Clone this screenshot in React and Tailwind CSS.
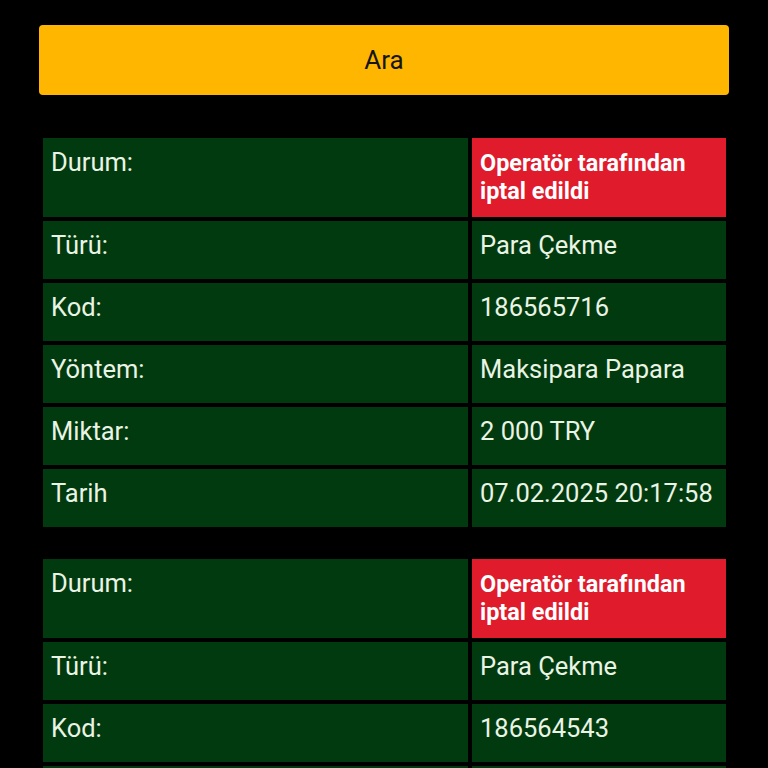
import React from 'react';

const islemler = [
  {
    durum: 'Operatör tarafından iptal edildi',
    turu: 'Para Çekme',
    kod: '186565716',
    yontem: 'Maksipara Papara',
    miktar: '2 000 TRY',
    tarih: '07.02.2025 20:17:58',
  },
  {
    durum: 'Operatör tarafından iptal edildi',
    turu: 'Para Çekme',
    kod: '186564543',
    yontem: 'Maksipara Papara',
    miktar: '2 000 TRY',
    tarih: '07.02.2025 20:05:12',
  },
];

const Hucre = ({ children }) => (
  <div className="bg-[#023a0f] pl-[8px] pr-[8px] pt-[10px] pb-[20px] text-[25.5px] leading-[28px] text-[#eaf4e4]">
    {children}
  </div>
);

const IslemTablosu = ({ islem }) => {
  const satirlar = [
    ['Türü:', islem.turu],
    ['Kod:', islem.kod],
    ['Yöntem:', islem.yontem],
    ['Miktar:', islem.miktar],
    ['Tarih', islem.tarih],
  ];

  return (
    <div className="grid grid-cols-[425px_254px] gap-[4px] p-[4px] w-[691px]">
      <Hucre>Durum:</Hucre>
      <div className="bg-[#df1b2c] pl-[8px] pr-[8px] pt-[11px] pb-[12px] text-[23.4px] leading-[28px] font-bold text-white">
        Operatör tarafından
        <br />
        iptal edildi
      </div>
      {satirlar.map(([etiket, deger]) => (
        <React.Fragment key={etiket}>
          <Hucre>{etiket}</Hucre>
          <Hucre>{deger}</Hucre>
        </React.Fragment>
      ))}
    </div>
  );
};

export default function App() {
  return (
    <div className="min-h-screen bg-black px-[39px] pt-[25px] pb-10" style={{ fontFamily: 'Roboto, "Noto Sans", sans-serif' }}>
      <button className="w-[690px] h-[70px] rounded-[4px] bg-[#ffb600] text-[#151515] text-[26px] flex items-center justify-center">
        Ara
      </button>

      <div className="mt-[39px] flex flex-col gap-[24px]">
        {islemler.map((islem) => (
          <IslemTablosu key={islem.kod} islem={islem} />
        ))}
      </div>
    </div>
  );
}
